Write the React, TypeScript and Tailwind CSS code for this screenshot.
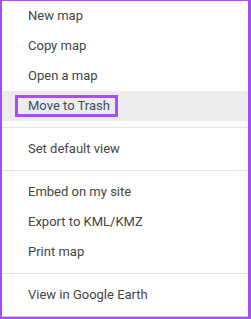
import React from "react";

const Row = ({ children, active }: { children: React.ReactNode; active?: boolean }) => (
  <div className={`h-[30px] flex items-center pl-[26px] ${active ? "bg-[#ececec]" : ""}`}>
    {children}
  </div>
);

const Divider = () => <div className="my-[6px] h-px bg-[#e3e3e3]" />;

export default function App() {
  return (
    <div
      className="w-[251px] h-[319px] bg-white border-t border-l-2 border-r-[3px] border-b-2 border-[#a64ff6] flex flex-col text-[13px] text-[#444444]"
      style={{ fontFamily: "Roboto, 'Liberation Sans', sans-serif" }}
    >
      <div className="flex-1 flex flex-col border-b border-[#c8c8c8]">
        <Row>New map</Row>
        <Row>Copy map</Row>
        <Row>Open a map</Row>
        <Row active>
          <span className="ml-[-13px] pl-[10px] pr-[5px] h-[22px] flex items-center border-[3px] border-[#a64ff6] text-[#3e4d60]">
            Move to Trash
          </span>
        </Row>
        <Divider />
        <Row>Set default view</Row>
        <Divider />
        <Row>Embed on my site</Row>
        <Row>Export to KML/KMZ</Row>
        <Row>Print map</Row>
        <Divider />
        <Row>View in Google Earth</Row>
      </div>
    </div>
  );
}
